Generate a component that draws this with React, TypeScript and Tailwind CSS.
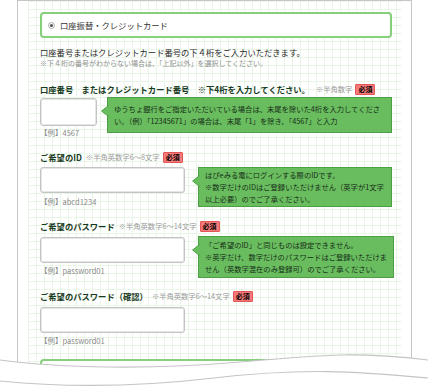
import React from "react";

function Badge({ className = "" }: { className?: string }) {
  return (
    <span
      className={
        "inline-flex h-[11px] items-center rounded-[1px] border border-[#e25656] bg-[#f67a7a] px-[2px] text-[7px] font-bold leading-none text-black " +
        className
      }
    >
      必須
    </span>
  );
}

function Callout({ lines, className = "" }: { lines: string[]; className?: string }) {
  return (
    <div
      className={
        "relative border border-[#4c9f42] bg-[#6abd5f] px-[6px] text-[7.3px] leading-[12px] text-[#152d17] " +
        className
      }
    >
      <svg className="absolute left-[-7px] top-[7px]" width="8" height="12" viewBox="0 0 8 12">
        <path d="M7.6,0.5 L0.6,6 L7.6,11.5 Z" fill="#6abd5f" />
        <path d="M7.6,0.5 L0.6,6 L7.6,11.5" fill="none" stroke="#4c9f42" strokeWidth="1" />
      </svg>
      {lines.map((l, i) => (
        <div key={i} className="whitespace-nowrap">
          {l}
        </div>
      ))}
    </div>
  );
}

function Radio({ checked }: { checked: boolean }) {
  return (
    <svg width="7" height="7" viewBox="0 0 7 7" className="shrink-0">
      <circle cx="3.5" cy="3.5" r="3" fill="#fff" stroke="#9a9a9a" strokeWidth="0.8" />
      {checked && <circle cx="3.5" cy="3.5" r="1.6" fill="#555" />}
    </svg>
  );
}

function Label({ title, note, noteGap = "ml-[4px]", className = "" }: { title: string; note: string; noteGap?: string; className?: string }) {
  return (
    <div className={"flex h-[12px] items-center " + className}>
      <span className="whitespace-nowrap text-[8.3px] font-bold leading-[12px] text-[#173a22]">{title}</span>
      <span className={"whitespace-nowrap text-[7.3px] leading-[12px] text-[#9a9a9a] " + noteGap}>{note}</span>
      <Badge className="ml-[3px]" />
    </div>
  );
}

function Input({ className = "" }: { className?: string }) {
  return (
    <div
      className={
        "rounded-[3px] border border-[#c4c4c4] bg-white shadow-[inset_0_0_0_1px_#e6e6e6] " + className
      }
    />
  );
}

function Example({ text, className = "" }: { text: string; className?: string }) {
  return <div className={"h-[12px] whitespace-nowrap text-[7.5px] leading-[12px] text-[#8a8a8a] " + className}>{text}</div>;
}

export default function App() {
  return (
    <div className="relative h-[390px] w-[428px] overflow-hidden bg-white font-['Noto_Sans_CJK_JP',sans-serif]">
      <div className="ml-[17px] h-[430px] w-[395px] border-x border-t border-[#c6c6c6] bg-white pl-[10px] pr-[9px]">
        <div className="h-full bg-[linear-gradient(to_right,#e9f5e6_1px,transparent_1px),linear-gradient(to_bottom,#e9f5e6_1px,transparent_1px)] bg-size-[8px_8px] pl-[12px] pr-[10px] pt-[11px]">
          {/* radio box */}
          <div className="flex h-[26px] items-center rounded-[4px] border-2 border-[#86d07c] bg-white pl-[6px]">
            <Radio checked />
            <span className="ml-[5px] whitespace-nowrap text-[8.3px] leading-[12px] text-[#333]">口座振替・クレジットカード</span>
          </div>

          <div className="mt-[9px] whitespace-nowrap text-[8.3px] leading-[11px] text-[#2a2a2a]">
            口座番号またはクレジットカード番号の下４桁をご入力いただきます。
          </div>
          <div className="whitespace-nowrap text-[7px] leading-[11px] text-[#8f8f8f]">
            ※下４桁の番号がわからない場合は、「上記以外」を選択してください。
          </div>

          {/* field 1 */}
          <Label
            className="mt-[14px]"
            title="口座番号　またはクレジットカード番号　※下4桁を入力してください。"
            note="※半角数字"
            noteGap="ml-[6px]"
          />
          <div className="mt-[3px] flex items-start">
            <div className="w-[57px] shrink-0">
              <Input className="h-[28px]" />
              <Example className="mt-[1px]" text="【例】4567" />
            </div>
            <Callout
              className="ml-[10px] mt-[-1px] flex-1 py-[5px]"
              lines={[
                "ゆうちょ銀行をご指定いただいている場合は、末尾を除いた4桁を入力してくださ",
                "い。（例）「12345671」の場合は、末尾「1」を除き、「4567」と入力",
              ]}
            />
          </div>

          {/* field 2 */}
          <Label className="mt-[12px]" title="ご希望のID" note="※半角英数字6〜8文字" />
          <div className="mt-[4px] flex items-start">
            <div className="w-[145px] shrink-0">
              <Input className="h-[26px]" />
              <Example className="mt-[3px]" text="【例】abcd1234" />
            </div>
            <Callout
              className="ml-[13px] flex-1 py-[1px]"
              lines={[
                "はぴeみる電にログインする際のIDです。",
                "※数字だけのIDはご登録いただけません（英字が1文字",
                "以上必要）のでご了承ください。",
              ]}
            />
          </div>

          {/* field 3 */}
          <Label className="mt-[12px]" title="ご希望のパスワード" note="※半角英数字6〜14文字" />
          <div className="mt-[5px] flex items-start">
            <div className="w-[145px] shrink-0">
              <Input className="h-[26px]" />
              <Example className="mt-[2px]" text="【例】password01" />
            </div>
            <Callout
              className="ml-[13px] mt-[-1px] flex-1 py-[2px]"
              lines={[
                "「ご希望のID」と同じものは設定できません。",
                "※英字だけ、数字だけのパスワードはご登録いただけま",
                "せん（英数字混在のみ登録可）のでご了承ください。",
              ]}
            />
          </div>

          {/* field 4 */}
          <Label className="mt-[12px]" title="ご希望のパスワード（確認）" note="※半角英数字6〜14文字" />
          <div className="mt-[5px] flex items-start">
            <div className="w-[145px] shrink-0">
              <Input className="h-[26px]" />
              <Example className="mt-[2px]" text="【例】password01" />
            </div>
          </div>

          {/* next radio box */}
          <div className="mt-[12px] flex h-[26px] items-center rounded-[4px] border-2 border-[#86d07c] bg-white pl-[6px]">
            <Radio checked={false} />
            <span className="ml-[5px] whitespace-nowrap text-[8.3px] leading-[12px] text-[#333]">上記以外</span>
          </div>
        </div>
      </div>

      {/* torn paper edge */}
      <svg className="pointer-events-none absolute inset-0" width="428" height="390" viewBox="0 0 428 390">
        <path d="M0,360 C60,368 150,370 240,362 S360,352 428,360 L428,390 L0,390 Z" fill="#fff" />
        <path d="M0,360 C60,368 150,370 240,362 S360,352 428,360" fill="none" stroke="#c4c4c4" strokeWidth="1.2" />
        <path d="M0,381 C50,386 120,389 214,378 S360,372 428,378" fill="none" stroke="#c4c4c4" strokeWidth="1.2" />
      </svg>
    </div>
  );
}
